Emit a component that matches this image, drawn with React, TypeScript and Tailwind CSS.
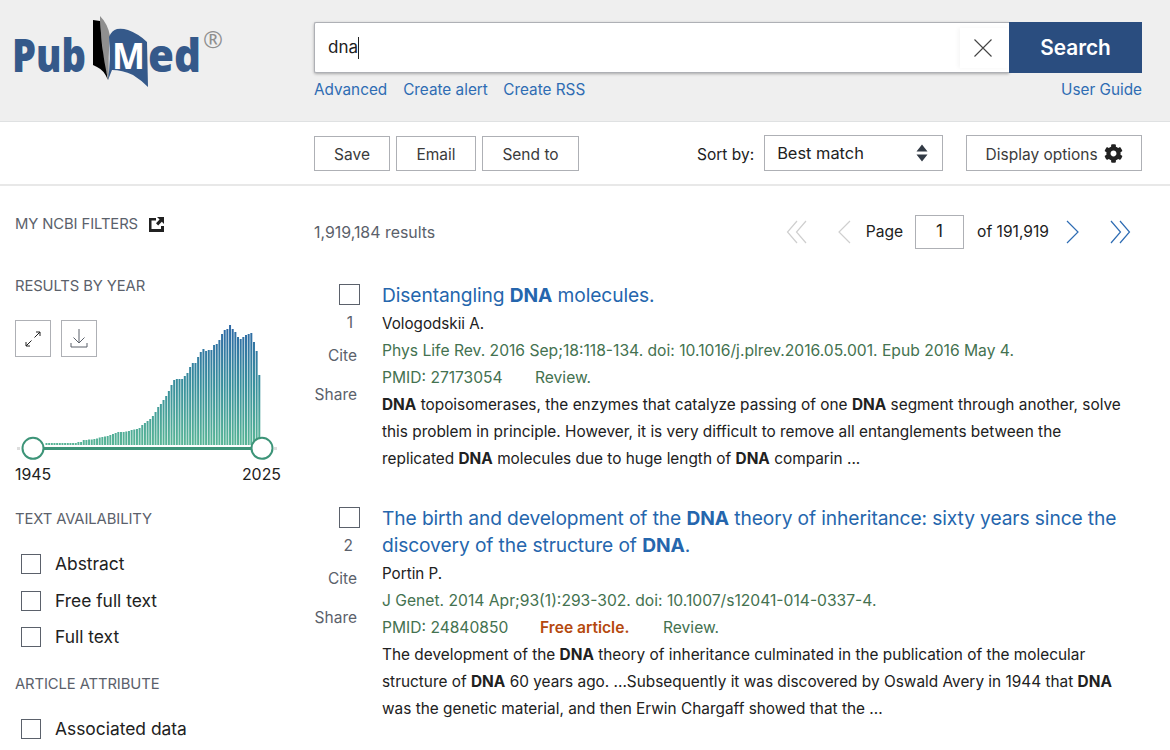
import { ReactNode } from "react";
import { FaCog } from "react-icons/fa";

const years = [
  2, 2, 2, 2, 2, 2, 2, 2, 2, 2, 2, 2, 3, 3, 5, 5, 5.5, 5.5, 6, 6.5, 7.5, 8, 8.5, 9, 10, 11, 12, 13, 13, 13, 13.5, 14, 15, 15.5,
  16, 17, 20, 22, 24, 26, 29, 33, 38, 41, 45, 49, 54, 60, 65, 66, 66, 66, 69, 72, 78, 82, 82, 88, 93, 96, 94, 95, 95, 100,
  101, 105, 111, 115, 116, 120, 116, 113, 108, 106, 108, 110, 111, 112, 103, 94, 70,
];

function Logo() {
  return (
    <svg width="230" height="90" viewBox="0 0 230 90" className="shrink-0">
      <text
        x="12"
        y="72"
        fontFamily="'Open Sans', sans-serif"
        fontWeight="800"
        fontSize="46"
        fill="#35598a"
        textLength="74"
        lengthAdjust="spacingAndGlyphs"
      >
        Pub
      </text>
      <path d="M100 16 Q108 24 110 36 Q108 55 109 80 L104 66 L100 22Z" fill="#8f8f8f" />
      <path d="M93 20 L100 21 L102 45 Q104 62 108 80 Q104 70 97 67 L93 65Z" fill="#000" />
      <path d="M109 37 Q112 30 117 29 Q122 28 128 30 Q139 34 147 42 L148 87 Q141 80 133 75 Q122 70 112 70 L108 80 Q111 60 109 37Z" fill="#35598a" />
      <text
        x="112"
        y="69"
        fontFamily="'Open Sans', sans-serif"
        fontWeight="700"
        fontSize="36"
        fill="#fff"
        textLength="33"
        lengthAdjust="spacingAndGlyphs"
      >
        M
      </text>
      <text
        x="148"
        y="72"
        fontFamily="'Open Sans', sans-serif"
        fontWeight="800"
        fontSize="46"
        fill="#35598a"
        textLength="53"
        lengthAdjust="spacingAndGlyphs"
      >
        ed
      </text>
      <text x="213" y="48" textAnchor="middle" fontFamily="'Open Sans', sans-serif" fontSize="24" fill="#8f8f8f">
        ®
      </text>
    </svg>
  );
}

function YearChart() {
  return (
    <svg width="280" height="145" viewBox="0 0 280 145" className="block">
      <defs>
        <linearGradient id="barFill" gradientUnits="userSpaceOnUse" x1="0" y1="5" x2="0" y2="125">
          <stop offset="0" stopColor="#2f69a6" />
          <stop offset="0.5" stopColor="#388f9c" />
          <stop offset="1" stopColor="#58b596" />
        </linearGradient>
      </defs>
      {years.map((h, i) => (
        <rect key={i} x={45.5 + i * 2.66} y={125 - h} width={2} height={h} fill="url(#barFill)" />
      ))}
      <rect x="17" y="127" width="3" height="3" fill="#ddd" />
      <rect x="274" y="127" width="3" height="3" fill="#ddd" />
      <rect x="33" y="127" width="229" height="3" fill="#3d9478" />
      <circle cx="33" cy="128.3" r="10.5" fill="#fff" stroke="#3d9478" strokeWidth="2" />
      <circle cx="262" cy="128.3" r="10.5" fill="#fff" stroke="#3d9478" strokeWidth="2" />
    </svg>
  );
}

function SideHeading({ children }: { children: ReactNode }) {
  return <h3 className="text-[14.8px] leading-[20px] text-[#5b616b] tracking-[-0.1px]">{children}</h3>;
}

function SideCheck({ label }: { label: string }) {
  return (
    <label className="flex items-center h-[36.5px] pl-[6px] text-[#212121] text-[17.4px]">
      <span className="w-[20px] h-[20px] border border-[#5b616b] bg-white mr-[14px]" />
      {label}
    </label>
  );
}

function Sidebar() {
  return (
    <aside className="w-[314px] shrink-0 pl-[15px] pt-[28px]">
      <div className="flex items-center">
        <SideHeading>MY NCBI FILTERS</SideHeading>
        <svg width="15" height="15" viewBox="0 0 15 15" className="ml-[11px]">
          <path d="M0 1h7v2.5H2.5v8.5h9.5V9H15v6H0z" fill="#212121" />
          <path d="M8 0h7v7l-2.2-2.2-3.6 3.6-2.2-2.2 3.6-3.6z" fill="#212121" />
        </svg>
      </div>
      <div className="mt-[42px]">
        <SideHeading>RESULTS BY YEAR</SideHeading>
      </div>
      <div className="relative mt-[24px] h-[189px]">
        <div className="flex gap-[10px]">
          <button className="w-[36px] h-[37px] border border-[#aeb0b5] flex items-center justify-center">
            <svg width="18" height="18" viewBox="0 0 18 18" fill="none" stroke="#212121" strokeWidth="1">
              <path d="M10.5 7.5 16 2M12 2h4v4M7.5 10.5 2 16M2 12v4h4" />
            </svg>
          </button>
          <button className="w-[36px] h-[37px] border border-[#aeb0b5] flex items-center justify-center">
            <svg width="18" height="22" viewBox="0 0 18 22" fill="none" stroke="#5b616b" strokeWidth="1">
              <path d="M9 1v14M3.5 9.5 9 15l5.5-5.5M1 15v4h16v-4" />
            </svg>
          </button>
        </div>
        <div className="absolute left-[-15px] top-0">
          <YearChart />
        </div>
        <div className="absolute left-0 top-[145px] w-[266px] flex justify-between text-[15.9px] leading-[20px] text-[#212121]">
          <span>1945</span>
          <span>2025</span>
        </div>
      </div>
      <SideHeading>TEXT AVAILABILITY</SideHeading>
      <div className="mt-[17px]">
        <SideCheck label="Abstract" />
        <SideCheck label="Free full text" />
        <SideCheck label="Full text" />
      </div>
      <div className="mt-[18px]">
        <SideHeading>ARTICLE ATTRIBUTE</SideHeading>
      </div>
      <div className="mt-[17px]">
        <SideCheck label="Associated data" />
      </div>
    </aside>
  );
}

function B({ children }: { children: ReactNode }) {
  return <b className="font-bold">{children}</b>;
}

function Result({
  n,
  title,
  authors,
  citation,
  pmid,
  free,
  snippet,
}: {
  n: number;
  title: ReactNode;
  authors: string;
  citation: string;
  pmid: string;
  free?: boolean;
  snippet: ReactNode;
}) {
  return (
    <article className="flex">
      <div className="w-[43px] shrink-0 mr-[25px] flex flex-col items-end text-[#5b616b] text-[15.5px] mt-[2px]">
        <span className="w-[21px] h-[21px] border border-[#5b616b] mr-[-3px]" />
        <span className="leading-[20px] mt-[8px] mr-[4px]">{n}</span>
        <span className="leading-[20px] mt-[13px]">Cite</span>
        <span className="leading-[20px] mt-[19px]">Share</span>
      </div>
      <div className="flex-1 min-w-0">
        <h2 className="text-[19.2px] leading-[27px] mb-[1px] text-[#2566ad] tracking-[-0.1px]">{title}</h2>
        <p className="text-[15.2px] leading-[27px] text-[#212121]">{authors}</p>
        <p className="text-[15.65px] leading-[27px] text-[#447250]">{citation}</p>
        <p className="text-[15.6px] leading-[27px] text-[#447250] flex">
          <span className={free ? "w-[158px]" : "w-[153px]"}>PMID: {pmid}</span>
          {free ? <span className="w-[123px] font-semibold text-[#b5490e]">Free article.</span> : null}
          <span>Review.</span>
        </p>
        <p className="text-[15.39px] leading-[27px] text-[#212121]">{snippet}</p>
      </div>
    </article>
  );
}

export default function App() {
  return (
    <div className="h-screen overflow-hidden bg-white font-['Inter',sans-serif]">
      <header className="h-[122px] bg-[#efefef] border-b border-[#dfe1e2] flex">
        <div className="w-[314px] shrink-0">
          <Logo />
        </div>
        <div className="w-[828px] pt-[22px]">
          <div className="flex h-[51px]">
            <div className="flex-1 flex items-center bg-white border border-[#aeb0b5] border-r-0 rounded-l-[2px] shadow-[0_1px_3px_rgba(0,0,0,0.3)] pl-[13px] text-[17px] text-[#212121]">
              <span>dna</span>
              <span className="w-px h-[22px] bg-[#212121]" />
              <span className="ml-auto w-[49px] h-[40px] flex items-center justify-center bg-white shadow-[-2px_0_4px_rgba(0,0,0,0.04)] pr-[3px]">
                <svg width="20" height="20" viewBox="0 0 20 20" fill="none" stroke="#444" strokeWidth="1.1">
                  <path d="M1.5 1.5 18.5 18.5M18.5 1.5 1.5 18.5" />
                </svg>
              </span>
            </div>
            <button className="w-[133px] bg-[#2a4d7f] text-white font-semibold text-[20.8px]">Search</button>
          </div>
          <div className="flex text-[15.3px] leading-[20px] text-[#2e6cb3] mt-[7px]">
            <a className="mr-[16px]">Advanced</a>
            <a className="mr-[15.5px]">Create alert</a>
            <a>Create RSS</a>
            <a className="ml-auto">User Guide</a>
          </div>
        </div>
      </header>

      <div className="h-[64px] border-b-2 border-[#e8e8e8] flex items-center pl-[314px] text-[15.5px] text-[#212121]">
        <div className="flex gap-[6px]">
          {["Save", "Email", "Send to"].map((t) => (
            <button
              key={t}
              className={`h-[35px] pt-[3px] border border-[#aeb0b5] text-[#3b3b3b] ${
                t === "Save" ? "w-[76px]" : t === "Email" ? "w-[80px]" : "w-[97px]"
              }`}
            >
              {t}
            </button>
          ))}
        </div>
        <span className="ml-[118px] mr-[10px] pt-[3px]">Sort by:</span>
        <div className="w-[179px] h-[36px] border border-[#aeb0b5] flex items-center pl-[12px] pr-[14px] text-[16.4px]">
          Best match
          <svg width="12" height="18" viewBox="0 0 12 18" className="ml-auto" fill="#323a45">
            <path d="M6 0.5 11.5 7.5H0.5zM6 17.5 0.5 10.5H11.5z" />
          </svg>
        </div>
        <button className="w-[176px] h-[36px] border border-[#aeb0b5] ml-[23px] flex items-center justify-center text-[#3b3b3b]">
          <span className="pt-[3px]">Display options</span>
          <FaCog size={19} className="ml-[6px] text-[#212121]" />
        </button>
      </div>

      <div className="flex">
        <Sidebar />
        <main className="w-[828px] pt-[28px]">
          <div className="flex items-center h-[36px]">
            <span className="text-[15.9px] text-[#5b616b] pt-[1px]">1,919,184 results</span>
            <div className="ml-auto flex items-center text-[15.6px] text-[#212121] mr-[11px]">
              <svg width="22" height="24" viewBox="0 0 22 24" fill="none" stroke="#cfcfcf" strokeWidth="1.2">
                <path d="M11 1 1.5 12 11 23M20 1 10.5 12 20 23" />
              </svg>
              <svg width="14" height="24" viewBox="0 0 14 24" fill="none" stroke="#cfcfcf" strokeWidth="1.2" className="ml-[29px]">
                <path d="M13 1 2 12l11 11" />
              </svg>
              <span className="ml-[15px]">Page</span>
              <span className="w-[49px] h-[34px] border border-[#aeb0b5] flex items-center justify-center text-[17px] ml-[12px]">
                1
              </span>
              <span className="ml-[13px]">of 191,919</span>
              <svg width="14" height="24" viewBox="0 0 14 24" fill="none" stroke="#2e6cb3" strokeWidth="1.2" className="ml-[17px]">
                <path d="M1 1l11 11L1 23" />
              </svg>
              <svg width="22" height="24" viewBox="0 0 22 24" fill="none" stroke="#2e6cb3" strokeWidth="1.2" className="ml-[29px]">
                <path d="M2 1l9.5 11L2 23M11 1l9.5 11L11 23" />
              </svg>
            </div>
          </div>
          <div className="mt-[32px] flex flex-col gap-[33px] pr-[16px]">
            <Result
              n={1}
              title={
                <>
                  Disentangling <B>DNA</B> molecules.
                </>
              }
              authors="Vologodskii A."
              citation="Phys Life Rev. 2016 Sep;18:118-134. doi: 10.1016/j.plrev.2016.05.001. Epub 2016 May 4."
              pmid="27173054"
              snippet={
                <>
                  <B>DNA</B> topoisomerases, the enzymes that catalyze passing of one <B>DNA</B> segment through another, solve
                  this problem in principle. However, it is very difficult to remove all entanglements between the replicated{" "}
                  <B>DNA</B> molecules due to huge length of <B>DNA</B> comparin ...
                </>
              }
            />
            <Result
              n={2}
              title={
                <>
                  The birth and development of the <B>DNA</B> theory of inheritance: sixty years since the discovery of the
                  structure of <B>DNA</B>.
                </>
              }
              authors="Portin P."
              citation="J Genet. 2014 Apr;93(1):293-302. doi: 10.1007/s12041-014-0337-4."
              pmid="24840850"
              free
              snippet={
                <>
                  The development of the <B>DNA</B> theory of inheritance culminated in the publication of the molecular structure of{" "}
                  <B>DNA</B> 60 years ago. ...Subsequently it was discovered by Oswald Avery in 1944 that <B>DNA</B> was the genetic
                  material, and then Erwin Chargaff showed that the ...
                </>
              }
            />
          </div>
        </main>
      </div>
    </div>
  );
}
